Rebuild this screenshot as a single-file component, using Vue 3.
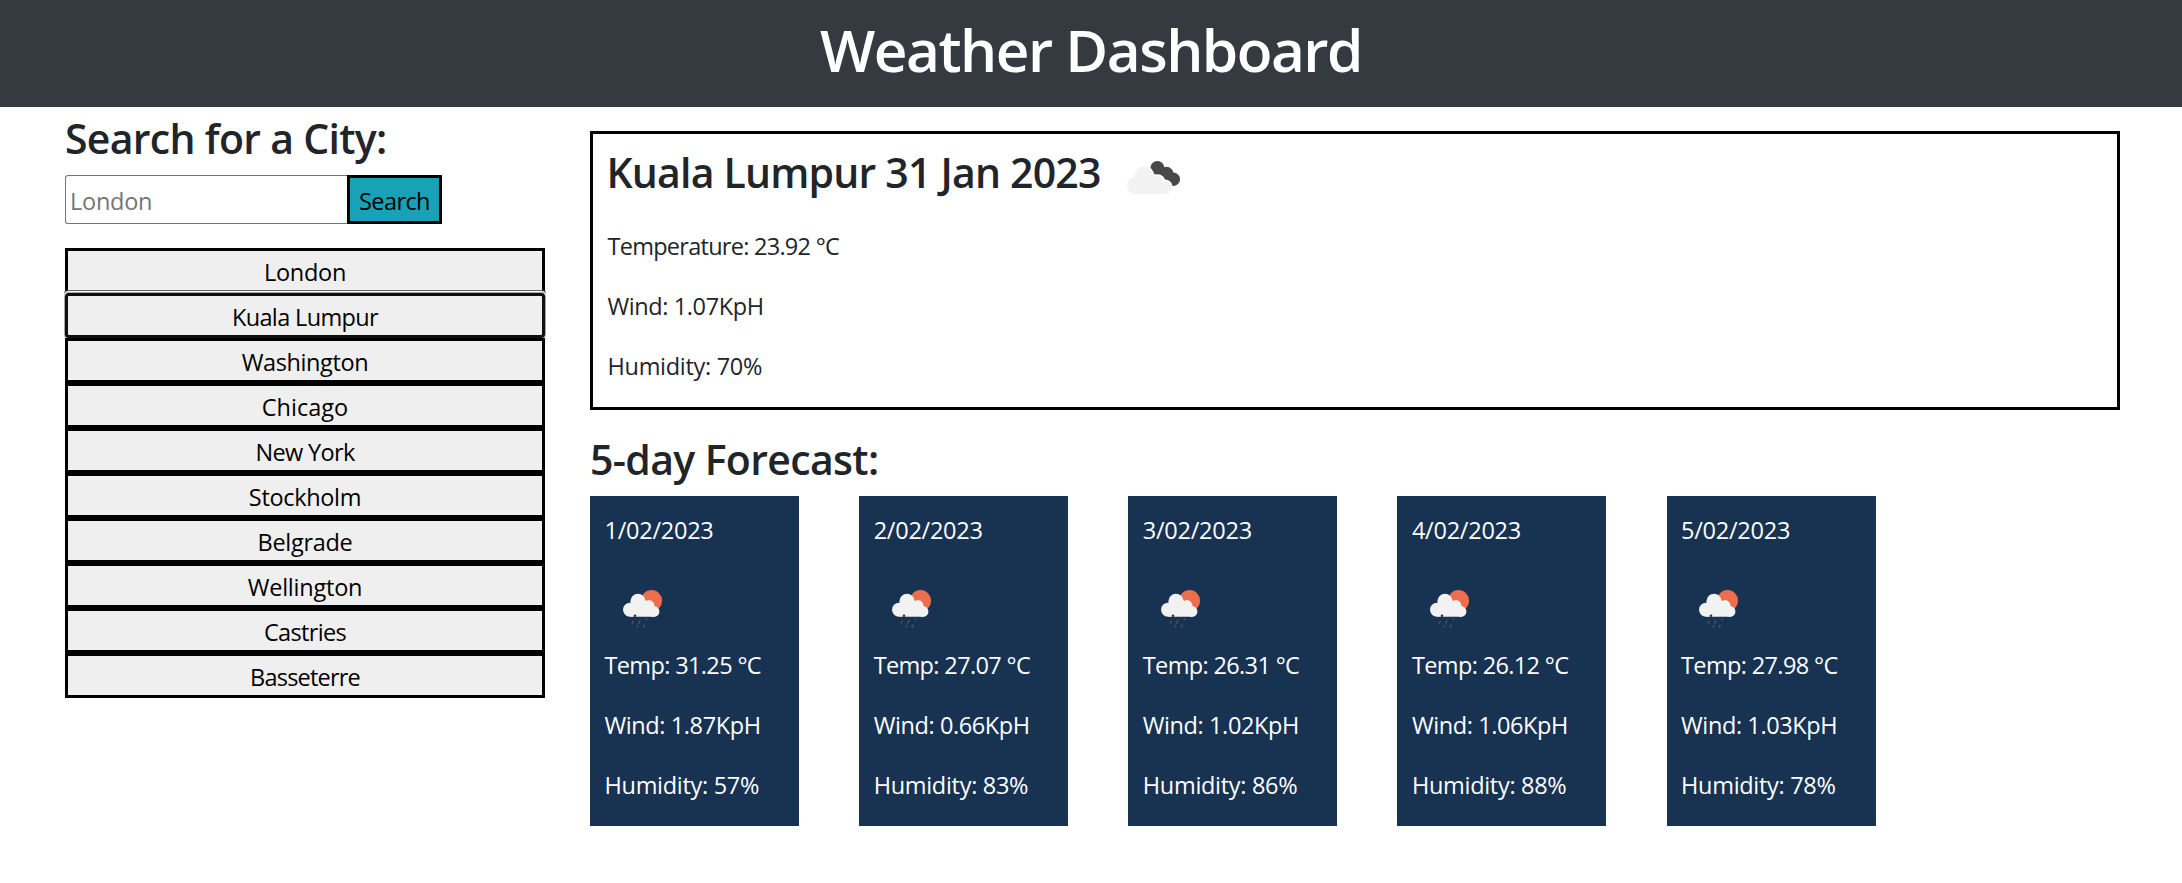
<script setup>
// `ls` is the letter spacing of each label, in px
const cities = [
  { name: 'London', ls: -0.25 },
  { name: 'Kuala Lumpur', ls: -0.63, focused: true },
  { name: 'Washington', ls: -0.4 },
  { name: 'Chicago', ls: 0 },
  { name: 'New York', ls: -0.65 },
  { name: 'Stockholm', ls: -0.33 },
  { name: 'Belgrade', ls: -0.3 },
  { name: 'Wellington', ls: -0.22 },
  { name: 'Castries', ls: -0.65 },
  { name: 'Basseterre', ls: -0.8 }
]
const days = [
  { date: '1/02/2023', temp: '31.25', wind: '1.87', humidity: 57 },
  { date: '2/02/2023', temp: '27.07', wind: '0.66', humidity: 83 },
  { date: '3/02/2023', temp: '26.31', wind: '1.02', humidity: 86 },
  { date: '4/02/2023', temp: '26.12', wind: '1.06', humidity: 88 },
  { date: '5/02/2023', temp: '27.98', wind: '1.03', humidity: 78 }
]
</script>

<template>
  <div class="page">
    <header class="banner"><h1>Weather Dashboard</h1></header>
    <main class="layout">
      <aside class="sidebar">
        <h2 class="search-title">Search for a City:</h2>
        <form class="search" @submit.prevent>
          <input class="search-input" type="text" placeholder="London" />
          <button class="search-button" type="submit">Search</button>
        </form>
        <div class="history">
          <button
            v-for="city in cities"
            :key="city.name"
            type="button"
            class="city"
            :class="{ focused: city.focused }"
            :style="{ letterSpacing: city.ls + 'px' }"
          >{{ city.name }}</button>
        </div>
      </aside>

      <section class="content">
        <article class="today">
          <div class="today-head">
            <h2 class="today-title">Kuala Lumpur 31 Jan 2023</h2>
            <svg class="today-icon" width="53" height="33" viewBox="0 0 53 33">
              <g fill="#484848">
                <circle cx="30.4" cy="7" r="7" />
                <circle cx="39.4" cy="13" r="7.2" />
                <circle cx="46.2" cy="18.3" r="6.8" />
                <path d="M31 4 L47 13 L46 24 L30 14Z" />
              </g>
              <g fill="#f2f2f2" stroke="#fff" stroke-width="1.6">
                <circle cx="17" cy="15" r="9.6" />
                <circle cx="30.6" cy="21" r="7" />
                <circle cx="37.8" cy="26.4" r="7.2" />
              </g>
              <g fill="#f2f2f2">
                <circle cx="8.5" cy="24.5" r="8.5" />
                <circle cx="17.2" cy="14.5" r="9.2" />
                <circle cx="30" cy="21" r="6.6" />
                <circle cx="38.5" cy="26.4" r="6.6" />
                <path d="M8.5 33H38.5V22L26 14L8 17Z" />
              </g>
            </svg>
          </div>
          <p class="t-temperature">Temperature: 23.92 °C</p>
          <p class="t-wind">Wind: 1.07KpH</p>
          <p class="t-humidity">Humidity: 70%</p>
        </article>

        <h2 class="forecast-title">5-day Forecast:</h2>
        <div class="forecast">
          <article v-for="day in days" :key="day.date" class="card">
            <p class="t-date">{{ day.date }}</p>
            <svg class="card-icon" width="75" height="75" viewBox="0 0 75 75">
              <circle cx="46.5" cy="28.7" r="10.6" fill="#ec6e4c" />
              <g fill="#f2f2f2">
                <circle cx="25" cy="37.8" r="7" />
                <circle cx="33" cy="29.3" r="7.6" />
                <circle cx="44" cy="33.5" r="5.4" />
                <circle cx="49" cy="39.5" r="5.4" />
                <path d="M25 44.8H49V37L40 28L26 31Z" />
              </g>
              <circle cx="30" cy="43.8" r="1.3" fill="#333" />
              <g stroke="#55504d" stroke-width="1.5" stroke-linecap="round">
                <path d="M28.1 49.3L27.3 51.2M34.9 48.8L33.9 51.2M41.6 46.9L41.2 47.8M32.6 53.8L32.3 54.7M39.2 53.2L38.2 55.2" />
              </g>
            </svg>
            <p class="t-temp">Temp: {{ day.temp }} °C</p>
            <p class="t-wind">Wind: {{ day.wind }}KpH</p>
            <p class="t-humidity">Humidity: {{ day.humidity }}%</p>
          </article>
        </div>
      </section>
    </main>
  </div>
</template>

<style scoped>
.page {
  min-height: 883px;
  background: #fff;
  color: #212529;
  font: 23.5px/36px "Open Sans", "Noto Sans", sans-serif;
}
.banner {
  box-sizing: border-box;
  height: 107px;
  padding-top: 13px;
  background: #343a40;
  color: #fff;
  text-align: center;
}
h1, h2, p { margin: 0; }
h1 { font-size: 58.5px; line-height: 72px; font-weight: 600; letter-spacing: -1.5px; }
h2 { font-size: 41px; line-height: 50px; font-weight: 600; letter-spacing: -0.65px; white-space: nowrap; }
p { white-space: nowrap; }
input, button {
  box-sizing: border-box;
  margin: 0;
  font: inherit;
  line-height: normal;
  border-radius: 0;
  color: #000;
}
.layout { display: flex; gap: 45px; padding-left: 65px; }
.sidebar { width: 480px; }
.search-title { margin: 6px 0 12px; letter-spacing: -0.7px; }
.search { display: flex; }
.search-input {
  width: 282px;
  height: 49px;
  padding: 3px 4px 0;
  border: 1px solid #767676;
  border-right: 0;
  border-radius: 3px 0 0 3px;
  letter-spacing: -0.25px;
}
.search-input::placeholder { color: #757575; opacity: 1; }
.search-button {
  width: 95px;
  height: 49px;
  padding: 3px 0 0;
  border: 3px solid #000;
  background: #17a2b8;
  letter-spacing: -0.6px;
}
.history { display: flex; flex-direction: column; margin-top: 24px; }
.city {
  height: 45px;
  padding: 3px 0 0;
  border: 3px solid #000;
  background: #efefef;
}
.city.focused {
  border-color: #101010;
  border-radius: 4px;
  box-shadow: 0 0 0 1px #a8a8a8, 0 0 0 2px #fff, 0 0 0 3px #666;
  clip-path: inset(-3px -1px 0);
}
.content { width: 1530px; }
.today {
  box-sizing: border-box;
  height: 279px;
  margin: 24px 0;
  padding: 13px 0 0 14.5px;
  border: 3px solid #000;
}
.today-head { display: flex; gap: 26px; margin: 0 0 31px -1px; }
.today-title { letter-spacing: -0.8px; }
.today-icon { margin-top: 14px; }
.today p + p { margin-top: 24px; }
.forecast-title { margin-bottom: 12px; }
.forecast { display: flex; gap: 60.15px; }
.card {
  box-sizing: border-box;
  width: 209px;
  height: 330px;
  padding: 16px 0 0 14.5px;
  background: #183252;
  color: #fff;
}
.card-icon { display: block; margin-top: 24px; }
.card p + p { margin-top: 24px; }
.t-temperature { letter-spacing: -0.73px; }
.t-date { letter-spacing: -0.25px; }
.t-temp { letter-spacing: -0.64px; }
.t-wind { letter-spacing: -0.4px; }
.t-humidity { letter-spacing: -0.3px; }
</style>

<style>
body { background: #fff; }
</style>
